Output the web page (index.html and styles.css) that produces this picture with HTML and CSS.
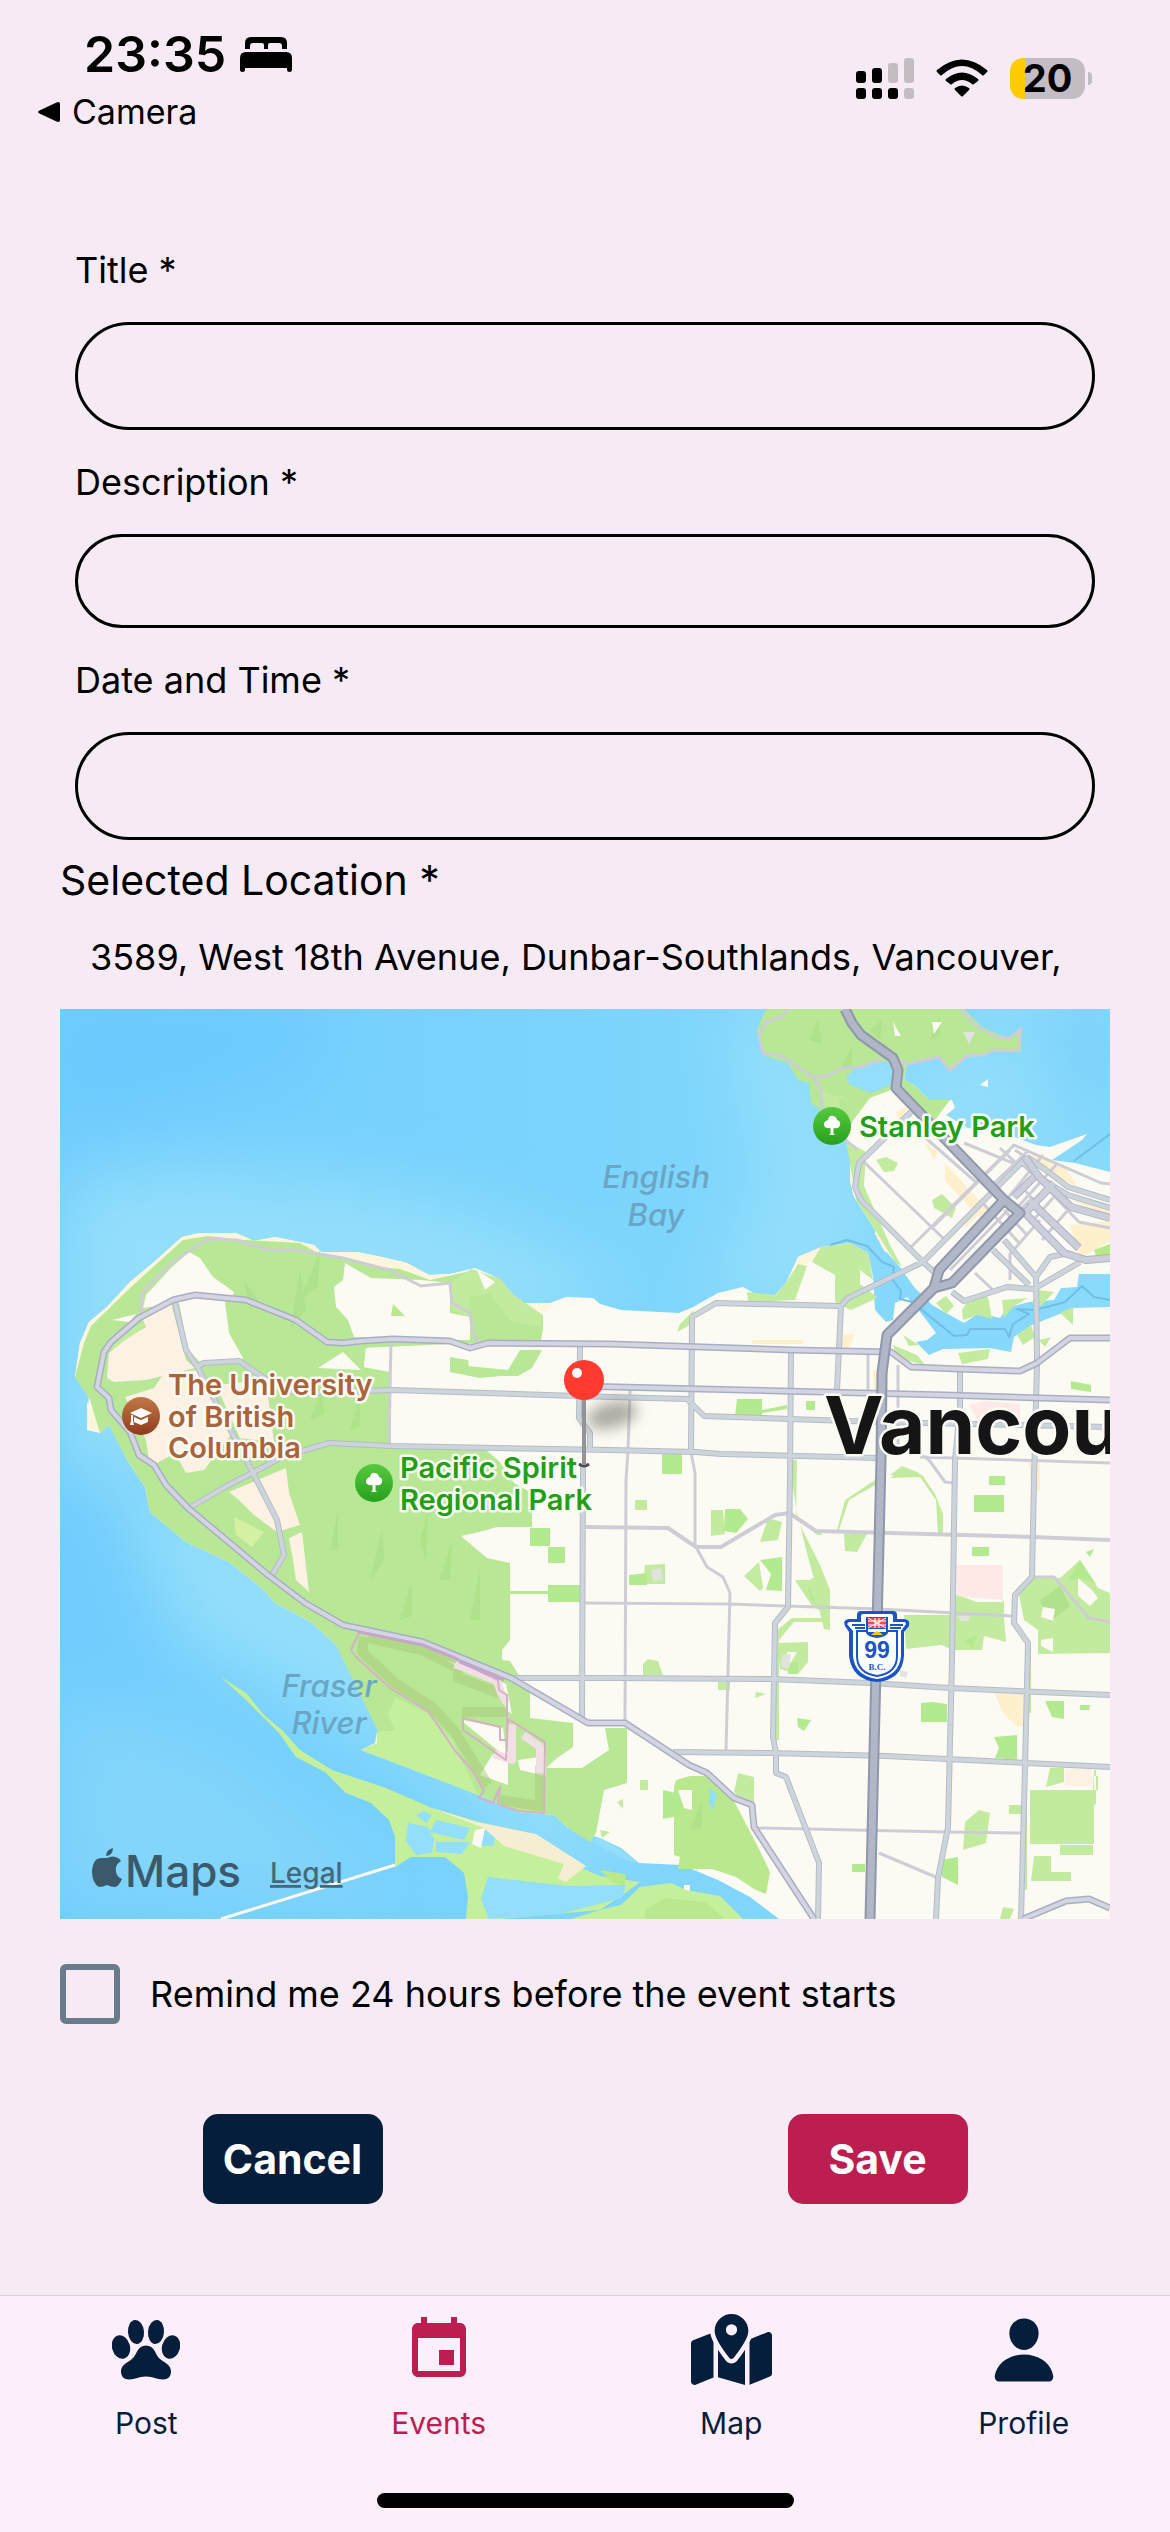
FILE: index.html
```html
<!DOCTYPE html>
<html lang="en">
<head>
<meta charset="utf-8">
<meta name="viewport" content="width=device-width, initial-scale=1">
<title>New event</title>
<link rel="stylesheet" href="styles.css">
</head>
<body>
<header class="status">
  <div class="status-left">
    <div class="clock">
      <span>23:35</span>
      <svg class="bed" viewBox="0 0 52 35" aria-hidden="true"><path d="M5 12V6q0-6 6-6h30q6 0 6 6v6h-5V9q0-3-3-3H30q-2 0-2 2v4h-4V8q0-2-2-2h-9q-3 0-3 3v3zM0 21q0-6 6-6h40q6 0 6 6v12q0 2-2.500 2T47 33v-2H5v2q0 2-2.500 2T0 33z"/></svg>
    </div>
    <a class="back" href="#camera">
      <svg class="back-arrow" viewBox="0 0 22 20" aria-hidden="true"><path d="M1.500 8.500 18.500.4Q22-.8 22 2v16q0 2.800-3.500 1.600L1.500 11.500q-3-1.500 0-3z"/></svg>
      <span>Camera</span>
    </a>
  </div>
  <div class="status-right">
    <svg class="signal" viewBox="0 0 58 41" aria-hidden="true">
      <g fill="#c4bcc3"><rect x="32" y="5" width="10" height="20" rx="3"/><rect x="48" width="10" height="25" rx="3"/><rect x="48" y="30" width="10" height="11" rx="3"/></g>
      <rect y="13" width="10" height="12" rx="3"/><rect x="16" y="10" width="10" height="15" rx="3"/><rect y="30" width="10" height="11" rx="3"/><rect x="16" y="30" width="10" height="11" rx="3"/><rect x="32" y="30" width="10" height="11" rx="3"/>
    </svg>
    <svg class="wifi" viewBox="0 0 52 38" aria-hidden="true"><path d="M1 11Q26-10 51 11q1 1 0 2l-3 3q-1 1-2 0Q26-2 6 16q-1 1-2 0l-3-3q-1-1 0-2zM10 20q16-13 32 0 1 1 0 2l-4 3q-1 1-2 0-10-8-20 0-1 1-2 0l-4-3q-1-1 0-2zM19 29q7-5 14 0 1 1 0 2l-6 6q-1 1-2 0l-6-6q-1-1 0-2z"/></svg>
    <div class="battery"><span class="battery-level">20</span><span class="battery-cap"></span></div>
  </div>
</header>

<main>
  <form class="event-form">
    <div class="fields">
      <div class="field">
        <label for="title">Title *</label>
        <input class="pill" id="title" type="text">
      </div>
      <div class="field">
        <label for="description">Description *</label>
        <input class="pill pill-short" id="description" type="text">
      </div>
      <div class="field">
        <label for="when">Date and Time *</label>
        <input class="pill" id="when" type="text">
      </div>
    </div>

    <div class="location">
      <label class="location-label" for="address">Selected Location *</label>
      <input class="address" id="address" type="text" readonly value="3589, West 18th Avenue, Dunbar-Southlands, Vancouver,">
      <svg class="map" viewBox="60 1009 1050 910" role="img" aria-label="Map of Vancouver">
        <defs>
          <linearGradient id="sea" x1="0" y1="0" x2="1" y2="0"><stop offset="0" stop-color="#71cdfd"/><stop offset=".5" stop-color="#7bd4fd"/><stop offset="1" stop-color="#8adafb"/></linearGradient>
          <linearGradient id="park" x1="0" y1="0" x2="0" y2="1"><stop offset="0" stop-color="#56ca3f"/><stop offset="1" stop-color="#28a01d"/></linearGradient>
          <linearGradient id="uni" x1="0" y1="0" x2="0" y2="1"><stop offset="0" stop-color="#c07a45"/><stop offset="1" stop-color="#903a1e"/></linearGradient>
          <filter id="soft" x="-50%" y="-50%" width="200%" height="200%"><feGaussianBlur stdDeviation="32"/></filter>
          <filter id="shade" x="-50%" y="-50%" width="200%" height="200%"><feGaussianBlur stdDeviation="7"/></filter>
          <g id="tree"><circle r="19" fill="url(#park)"/><path fill="#fff" d="M-1.500 8V2Q-9 3-8-3-6-6-4-6-3-11 1-10 4-10 5-6 9-5 8-1 7 3 1.500 2V8l2 1h-7z"/></g>
          <path id="marine" d="M814 1919 754 1827 752 1805 734 1798 707 1773 689 1765 625 1723H588L511 1678 423 1642 343 1625 305 1603 268 1575 188 1508 166 1485 154 1465 139 1455 130 1432 111 1410 109 1398 97 1387 104 1352 111 1342 139 1318 173 1300 195 1295 246 1300 296 1320 327 1342 343 1343 361 1341 393 1339 450 1341 470 1348 488 1343 610 1344 793 1350 891 1352 911 1367 959 1369 1020 1371 1037 1363 1070 1338H1110M575 1386 782 1391 945 1395 1110 1400M1023 1919 1066 1901 1089 1899 1110 1908"/>
          <path id="core" d="M1025 1213 1064 1253 1086 1260 1110 1258M1029 1200 1079 1248M1025 1157 1039 1177 1071 1207 1110 1218M1014 1197 1034 1177M1025 1213 1054 1183"/>
          <path id="highway" d="M845 1009 852 1023 861 1035 893 1058 898 1070 896 1088 1004 1200 939 1270 934 1288 887 1335 882 1373 881 1460 870 1919M1004 1200 1020 1213 952 1283 934 1288"/>
          <path id="street" d="M296 1393 393 1390 610 1397 687 1399 704 1416 789 1419 879 1422 1110 1427M189 1508 225 1487 254 1472 282 1457 329 1443 391 1446 610 1450 696 1452 721 1454 879 1458M175 1303 186 1350 198 1368 250 1467 277 1520 284 1555 271 1577M196 1367 204 1363 239 1361 264 1378 296 1393M580 1347 579 1418 590 1433V1450M583 1463 582 1717M692 1317 691 1452M692 1317 716 1303 841 1306 848 1298 923 1262 1027 1157M841 1306 837 1390M791 1350 790 1480 788 1607 775 1623 773 1737 776 1753V1773L786 1777 819 1863 818 1919M960 1370V1407L955 1460 952 1660 948 1827 938 1878 936 1919M1036 1273 1037 1363 1034 1480 1032 1577 1015 1595 1014 1623 1028 1643 1025 1767 1021 1919M511 1678H610L771 1679 871 1683 950 1688 1110 1695M673 1752 771 1753 886 1756 1110 1767M911 1112 859 1163 855 1187 861 1200 923 1262 934 1272M952 1292 964 1301 1007 1287 1034 1289 1080 1262M993 1250 1029 1285M1004 1240 1036 1277 1050 1257 1064 1254M1027 1157 1046 1170 1068 1187 1110 1200M1022 1162 1040 1178 1068 1195 1110 1208"/>
        </defs>

        <rect x="60" y="1009" width="1050" height="910" fill="url(#sea)"/>
        <g filter="url(#soft)">
          <path fill="#93defb" d="M60 1180 180 1165 360 1180 480 1210 640 1290 540 1330 60 1480z"/>
          <path fill="#93defb" d="M720 1009 760 1180 700 1310 860 1310 880 1160 800 1009zM900 1050H1030V1160H900z"/>
          <path fill="#93defb" d="M100 1440 180 1640 420 1760 560 1900 660 1830 320 1560z"/>
          <path fill="#6bc9fe" d="M60 1009H330L300 1060 60 1110zM1060 1009h50v150z"/>
          <path fill="#83d5fb" d="M60 1700 210 1740 400 1900H60zM480 1790 600 1860 740 1919V1860z"/>
        </g>

        <g fill="#fcfbf3">
          <path d="M75 1377 80 1343 89 1322 107 1307 130 1282 154 1262 182 1237 200 1233H236L254 1241 275 1237 314 1245 321 1252H357L382 1257 407 1263 429 1275 450 1274 475 1268 496 1277 511 1292 518 1303H550L566 1297 593 1298 600 1304 621 1310 679 1313 693 1307 718 1293 743 1287 757 1295H775L786 1283 798 1257 821 1247 850 1243 868 1253 873 1277 875 1310 886 1322 893 1320 895 1303 907 1297 921 1313 936 1333 927 1340 916 1342 929 1355 943 1349 989 1348 1011 1352 1014 1337 1032 1325 1057 1315 1075 1308 1110 1307V1919H779L750 1897 718 1880 682 1865 639 1863 621 1848 600 1838 568 1828 554 1815 518 1812 479 1795 393 1762 361 1750 375 1743 377 1732 395 1730 388 1715 395 1697 375 1677 336 1645 311 1622 275 1603 264 1590 229 1562 186 1542 150 1512 145 1487 127 1460 121 1447 109 1425 100 1433 87 1430 89 1393z"/>
          <path d="M1110 1172 1075 1163 1052 1160 1082 1140 1087 1134 1050 1147 1036 1145 1004 1133 968 1128 946 1115 955 1108 952 1100H929L914 1085 904 1080 907 1063 900 1058 896 1085 873 1093 858 1105 846 1140 854 1152 850 1177 854 1197 875 1230 882 1247 900 1267 914 1287 932 1305 964 1323 979 1313 1000 1318 1007 1308 1029 1302 1054 1300 1061 1288 1077 1287 1079 1274H1110z"/>
        </g>
        <path fill="#fdf6dc" d="M75 1377 80 1343 89 1322 107 1307 130 1282 154 1262 182 1237 200 1233H236L254 1241 275 1237 314 1245 321 1252H357L382 1257 407 1263 429 1275 450 1274 460 1280 420 1286 370 1268 320 1254 210 1240 150 1282 90 1335zM87 1402l8 12 5 18-13-3zM520 1304h35l-10 8zM798 1257l24-10-4 12-22 8zM850 1165l8 0-4 32-4-15zM875 1230l14 22-4 0-10-18z"/>

        <g fill="#b8e795">
          <path d="M75 1377 84 1343 91 1326 128 1290 152 1268 183 1240 208 1236 245 1240 300 1243 318 1253 350 1260 380 1267 400 1269 430 1280 475 1270 496 1279 511 1292 520 1308 543 1315 543 1328 541 1341 512 1342 490 1343 366 1348 364 1367 391 1372V1446L486 1450 500 1462 514 1483 532 1493V1527H497L462 1537 487 1558 510 1563V1640L502 1650V1660L510 1661 530 1693V1718L573 1723V1747L557 1758 546 1768H582L609 1750 605 1728H627V1783L604 1790 596 1833 590 1842 568 1828 554 1815 518 1812 479 1795 393 1762 336 1645 311 1622 275 1603 264 1590 229 1562 186 1542 150 1512 145 1487 127 1460 109 1425 100 1433 90 1400z"/>
          <path d="M766 1009H964L982 1027 1007 1038 1021 1028V1052H993L964 1058 950 1072 939 1058 907 1063 904 1080 914 1085 929 1100 950 1100 935 1120 896 1088 870 1098 855 1118 846 1130 821 1110 811 1103 809 1083 798 1080 788 1063 763 1055 757 1030z"/>
        </g>
        <g fill="#c3eb9f">
          <path d="M450 1283l21-14 30 10 10 14 32 22-2 12-30-6-22-28-20 4 2 22-20-10zM858 1105l-20-10 8 42-18-22-8-25zM110 1335l34-12-8 18-28 10z"/>
          <path d="M821 1247 850 1243 868 1253 873 1280 860 1270 860 1284 877 1297 873 1300 851 1310 835 1302V1275L812 1262zM786 1283 798 1264 807 1266 795 1300 748 1302 747 1292 775 1295zM680 1324l14-14-4 15-13 7z"/>
          <path d="M846 1140 866 1152 864 1186 890 1245 902 1267 895 1262 872 1225 856 1200zM876 1160l10-3 12 6-4 8-10 1zM932 1200l10-6 14 14-4 10-18-10z"/>
          <path d="M962 1310l8-13h18l4 22-14-4-15 5zM936 1303l10-7 8 10-8 8zM1002 1300l26-2-14 8-10 12zM1038 1290l16 2-14 15-8-4zM1060 1313l13-6v18zM958 1353l32-4-2 10-26 5zM1017 1335l14-10 4 12-12 8zM1039 1340l12-3-6 10zM893 1345l24 10 8 10-28-7zM903 1335l16 10-10 1z"/>
          <path d="M789 1460h8l-1 55 27 20-6 0-20-20zM800 1525l20 40 10 25v40l-6-1-5-20-3-24-6-20zM795 1580l15 0 8-6 12 30v12l-18-10zM777 1630l15-12h34v4h-32l-15 18v100h-5zM837 1530l8-30 30-20v5l-26 15-10 30zM890 1475l12-9 15 6 6 4 12 18 8 20v20h-5l-2-34-16-23-25-2zM844 1534h23l-10 18-12-1zM890 1478l14-11 18 10z"/>
          <path d="M777 1643l31-1v20l-10 12-18-5zM904 1615h45l35 5 20-20v18l2 24-22-6-2 14h-30l-10-5-36 4zM955 1594l22 8h24v22l-14 8-36-8z"/>
          <path d="M1018 1590 1034 1577 1060 1578 1080 1560 1098 1588 1110 1593V1653L1038 1654V1630L1024 1620z"/>
          <path d="M1030 1790h68v-14h-4v68H1030zM1050 1768h14v14l-18 5zM1094 1770h2v34l-4 2zM1060 1845h33v10h-33zM1034 1856h17v16h20v9h-40zM965 1822l14-12 11 3-4 30-23 7zM711 1510h12l2 24-14 2zM768 1518l14 4-4 18-18 2zM744 1576l15-14 4 26-3 3z"/>
          <path d="M643 1664l5-5 10 2 5 14h-20zM645 1565l20-1v20h-22zM635 1500h12v10h-12zM718 1682h12v8h-12zM756 1692l10 2-11 4zM738 1773l16 4v25l-12 0-8-10zM1009 1805h12v9h-12zM1003 1907l11 2-4 10h-10zM640 1780h8v10h-8zM617 1802l6-3v10zM600 1830l10 2-8 6z"/>
          <path d="M1028 1643h3v70h-3zM1025 1770h2v120h-2z"/>
        </g>
        <path fill="#b9e88f" d="M676 1780l14-4 24 0 20 25 24 46 12 25-4 22-12-5-18-12-24-8h-34l2-12-6-2v-68z"/>
        <g fill="#b4ea8f">
          <path d="M737 1399h25v17h-27zM806 1401h9v9h-9zM762 1410l25-5v4l-25 4zM662 1454h20v20h-20zM725 1509l15 0 8 10-12 14-12-2zM760 1560l22-3v34l-16-1 5-16zM974 1495h30v17h-30zM989 1476h16v9h-16zM972 1547h17v9h-17zM1071 1381l20 4v7l-20-3zM1080 1560l16 24-12-6-16 3zM1045 1701h19v18l-12-2zM1080 1705h10l-1 5-9 0zM921 1703l12-1 14 2v18h-26zM994 1737l23-2v25l-22-2 4-10zM797 1718l14 2-7 11-6-4zM663 1790l22 5-2 20-20 4zM941 1860l17-3v28l-16-8zM852 1864h13v8h-13zM629 1575l18-2v12h-18zM1086 1552l8-3-4 8zM788 1662h10v12h-10zM808 1585l8 18-6-4zM965 1640l12-5-4 14z"/>
          <path d="M548 1547h17v16h-17zM548 1585h33v17h-33zM510 1591h38v3h-38zM530 1528h20v18h-20z"/>
        </g>
        <path fill="#afe28b" d="M300 1300l20-50-2 36zM290 1330l10-60 6 40zM250 1310l-6-30 14 20zM420 1540l8-30-2 50zM440 1580l12-40-2 40zM470 1620l10-50v50zM370 1580l12-50 2 30zM330 1550l8-40v40zM400 1620l12-40v36zM310 1420l12-30 2 24zM350 1430l10-34v30zM810 1040l8-20 4 24zM840 1070l12-24v20zM870 1030l12-10-2 20zM930 1040l10-24v20zM690 1830l12-30v28zM1040 1600l20-14 10 20-20 16z"/>

        <g fill="#fcfaf2">
          <path d="M189 1252 200 1258 213 1277 234 1292 232 1297 225 1302 229 1333 243 1358 236 1363 200 1362 188 1350 179 1303 143 1308 146 1295 171 1268zM345 1263 371 1278 421 1280 450 1283V1313L470 1317V1340H450L354 1337 348 1320 336 1307 334 1287 343 1280zM318 1368l25-16 18 18zM477 1270l18 12-10 8zM112 1320l24-6-6 8z"/>
          <path d="M366 1348 450 1344V1370L480 1376 541 1378 560 1360 580 1350H610V1460H500L486 1450 391 1444V1372L364 1367zM497 1528l2 12 30-6v28l-22 0-24-12-22-14zM893 1022l8 14h-6zM932 1022h10l-8 12zM980 1085l8-6v8z"/>
          <path d="M446 1660l30 10 30 14 6 30-6-4-6-32-44-12zM463 1720l40 8 4 30-44-36zM480 1775l12-20 16-4 0 34zM518 1760l28-4v20l-26-6zM1078 1578l14 12 6 8-8 8-12-10zM1043 1607l12 2-2 12-12-4zM1041 1640l12-2v14l-12-6zM787 1652h10l-7 12-4-4zM678 1790l14 0v20l-8-2zM684 1885h6v8h-6z"/>
        </g>
        <path fill="#b8e795" d="M450 1357l18 3 2 14 30 2-20 2-30-6zM520 1350l22 0-10 18-14 8-50 0 0-10 40 4z"/>
        <g fill="#fdf1e3">
          <path d="M171 1303 186 1360 195 1368 146 1380 114 1382 107 1378 109 1353 125 1340 146 1327 143 1320zM164 1373 200 1370 211 1393 232 1433 204 1470 186 1473 175 1453 150 1467 146 1440 125 1397 154 1388zM229 1492 286 1468 289 1493 300 1525 277 1532 254 1515 239 1500zM289 1538 302 1532 309 1592 296 1580 293 1560zM216 1385l50-5 8 62-34-4zM1066 1769h26v18l-28-2z"/>
        </g>
        <path fill="#fff0cd" d="M994 1692h32v34l-10 0-14-14zM1028 1460h12v30h-8zM873 1370h15v22h-14zM843 1335l12-1-6 14-8-2zM751 1340h52v4h-50zM945 1163l44 48-10 6-34-36zM972 1205l12 4-20 20zM1070 1225l40-4v20l-30 18zM1027 1150l40 20 10 16-30-12zM1072 1200l38 4v14zM896 1112l12-6-8 18zM924 1142l14 10-4 8z"/>
        <path fill="#ffe9e7" d="M968 1405l16-4 36 3v20l-38 2zM956 1565h47v35l-46-4z"/>
        <path fill="#e2e2df" d="M963 1032h12l-6 12zM651 1570l10-2 2 12-10 1zM782 1655l9-1-2 15-8-2zM957 1616l12 0v5h-8zM900 1670l8 2-2 6-6-2z"/>
        <path fill="#b8e987" d="M391 1316l2-12 12 12zM1094 1250l16-6v14l-14-2z"/>
        <path fill="#d4f1a2" d="M234 1517l30 15-12 15-16-12z"/>

        <g fill="#92defb">
          <path d="M846 1077l11-10 29-6 7 6-2 18-20 8-21-8zM709 1788l8 6-4 16-4-8z"/>
        </g>
        <path fill="#c4f09b" d="M221 1677 246 1693 264 1715 282 1730 300 1750 332 1770 386 1788 432 1808 479 1822 525 1832 550 1843 579 1867 600 1876 626 1880 640 1882 625 1893 600 1910 500 1919H466L468 1897 464 1873 445 1857H411L395 1867V1837L389 1820 371 1803 346 1793 325 1772 296 1757 279 1733 246 1700zM571 1919 600 1910 621 1905 640 1887 671 1883 686 1890 720 1896 743 1919zM361 1750l16-7v-11l18-2-7-15 7-18 30 15 27 28 26 55-85-33z"/>
        <path fill="#b9e88f" d="M645 1910l20-12 40 4 20 17h-80zM600 1870l26 4-2 12-12-4z"/>
        <path fill="#92defb" d="M416 1815l8-4 8 4-6 8zM408 1823l20 4 6 12-2 14-16 2-10-14zM436 1820l34 8-6 12-34-8zM436 1842l34 0-8 12-26-2zM485 1830l12 2-4 14-14 0zM488 1877 568 1886 626 1885 622 1898 560 1914 489 1919 481 1899z"/>
        <path fill="#f6eed3" d="M432 1808l44 14 60 12 50 32-20 16-8-4 6-14-60-18-20-18z"/>
        <path fill="#fbf9f0" d="M475 1830l10-2-4 20-9-4z"/>
        <path fill="#92defb" d="M600 1838 621 1850 640 1864 625 1860 590 1840z"/>
        <path fill="none" stroke="#fdfaf1" stroke-width="3" d="M221 1919 395 1865"/>

        <g fill="none" stroke-linejoin="round">
          <path stroke="#72bde6" stroke-width="2" d="M830 1245l17-5 20 6 15 16 12 5-2 12 9 12-1 8 12 3 42 34 13-1 3-6 35 0 4 8 4-13 16-10-12-5 18 1 30-8 17-16 12 11 16 3M1074 1161l36-27"/>
          <path stroke="#a9c979" stroke-opacity=".5" stroke-width="10" d="M364 1637 362 1652 395 1683 432 1707 455 1732 488 1785M368 1638l54 12 36 18 0 10 44 16M462 1712l44 0M500 1800l40 6v-40"/>
          <path stroke="#f0e0e4" stroke-width="8" d="M455 1664l42 17 4 12 6 10M512 1724v36l-18-6M523 1735l17 12v26"/>
          <path stroke="#d7b0c6" stroke-width="2" d="M359 1632 351 1650 357 1658 390 1688 429 1712 445 1736 456 1752 472 1770 484 1791 479 1798 493 1803 500 1787 498 1804 518 1811 544 1813 545 1742 508 1719 506 1760 463 1730 463 1718 500 1727V1740H507V1695L499 1690 498 1680 456 1660"/>

          <g stroke="#cecdd6" stroke-width="3">
            <path d="M141 1315V1295L154 1280 173 1262 207 1239 236 1240 268 1250H296L343 1258 389 1270 421 1286 450 1283 452 1303 470 1313 473 1333 479 1343M391 1340 389 1443M630 1390 628 1450 626 1480 625 1723M691 1452 695 1473V1547M696 1547 707 1567 723 1577 730 1593 726 1750M584 1603 730 1604 786 1606 879 1609 1012 1616M757 1828 946 1832 1021 1833M879 1853 938 1878M921 1455 929 1460 945 1482 954 1483M1034 1577H1054L1089 1618 1110 1622M920 1457 1110 1463M898 1365v90M868 1352v90"/>
            <path stroke-width="4" d="M586 1527 668 1528 696 1547H721L775 1515 789 1513 816 1531 1032 1537 1110 1540"/>
            <path d="M788 1009 782 1017 766 1022 759 1035 763 1053 782 1056 814 1078 821 1090 822 1110 846 1140 857 1150M814 1078 829 1075 843 1068 861 1067 882 1059M900 1062 907 1064 939 1057 950 1070 968 1055 984 1055 993 1050 1018 1051 1021 1029 1011 1038 998 1038 975 1025 961 1010"/>
            <path d="M864 1162 945 1240M911 1247 1014 1145 1101 1183 1110 1184M920 1133 977 1183M964 1143 1018 1165 1000 1148M931 1229 977 1183 1010 1150M1033 1197 952 1280M975 1273 993 1290M950 1270l60-62M1040 1220l-30 34 0 26M1015 1150l30 20M1029 1150l-40 38M1043 1155l-36 44M1056 1165l-40 44M1060 1190l-30 34M1068 1210l-26 30M1004 1210l22 24M980 1200l40 44M1039 1180l40 42 31 6M1020 1185l45 50"/>
          </g>
          <use href="#street" stroke="#b4bccb" stroke-width="6"/>
          <use href="#street" stroke="#cdd5db" stroke-width="4"/>
          <use href="#core" stroke="#aeb2c6" stroke-width="8"/>
          <use href="#core" stroke="#cdcedb" stroke-width="6"/>
          <use href="#marine" stroke="#a8afc5" stroke-width="7"/>
          <use href="#marine" stroke="#d4d5e1" stroke-width="4"/>
          <path stroke="#c6a4cd" stroke-width="3" d="M359 1632l64 13 34 14M460 1662l44 18"/>
          <use href="#highway" stroke="#8f97ac" stroke-width="11"/>
          <use href="#highway" stroke="#b1b7c6" stroke-width="7"/>
        </g>

        <g class="water-label" text-anchor="middle">
          <text x="656" y="1188">English</text><text x="656" y="1226">Bay</text>
          <text x="329" y="1697">Fraser</text><text x="329" y="1734">River</text>
        </g>
        <g class="place place-park">
          <use href="#tree" x="832" y="1126"/><text x="859" y="1137">Stanley Park</text>
          <use href="#tree" x="374" y="1483"/><text x="400" y="1478">Pacific Spirit</text><text x="400" y="1510">Regional Park</text>
        </g>
        <g class="place place-uni">
          <circle cx="141" cy="1416" r="19" fill="url(#uni)"/>
          <path fill="#fff" d="M130 1413l11-5 11 5-11 5zM134 1417l7 3 7-3v5l-7 3-7-3zM131 1415h2v6l1 4h-4l1-4z"/>
          <text x="168" y="1395">The University</text><text x="168" y="1427">of British</text><text x="168" y="1458">Columbia</text>
        </g>
        <text class="city" x="824" y="1454">Vancouver</text>

        <g>
          <path fill="#1a55c8" d="M861 1611h32q4 0 4 4v4h7q7 1 5 7l-5 6v24q-2 24-27 26-25-2-28-26v-24l-4-6q-3-6 4-7h8v-4q0-4 4-4z"/>
          <path fill="#fff" d="M863 1614h28q2 0 2 2v6h12l1 2-5 7v25q-2 20-24 23-22-3-24-23v-25l-6-7 2-2h12v-6q0-2 2-2z"/>
          <path fill="none" stroke="#1a55c8" stroke-width="2" d="M852 1625h13m25 0h13M855 1628h10m25 0h11M866 1631h-9v25q0 17 20 20 20-3 20-20v-25h-9"/>
          <path fill="#1a55c8" d="M866 1617h22v16q-2 4-11 5-9-1-11-5z"/>
          <path fill="#ef4a57" d="M868 1618h18v10h-18z"/>
          <path stroke="#fff" stroke-width="1" d="M868 1621h18M868 1625h18M875 1618v10M879 1618v10M868 1618l18 10M886 1618l-18 10"/>
          <path fill="#fff" d="M868 1629h18v3h-18z"/><path fill="#fbc80b" d="M871 1635q6-7 12 0z"/>
          <text class="route" x="877" y="1658" text-anchor="middle">99</text>
          <text class="route-bc" x="877" y="1670" text-anchor="middle">B.C.</text>
        </g>

        <ellipse cx="612" cy="1415" rx="26" ry="13" fill="#77786f" opacity=".6" filter="url(#shade)" transform="rotate(-15 612 1415)"/>
        <path fill="none" stroke="#4d4e50" stroke-width="3" d="M579 1464q5 4 10 0"/>
        <path fill="none" stroke="#929496" stroke-width="4" d="M584 1398v67"/>
        <circle cx="584" cy="1380" r="20" fill="#ff3a2f"/><circle cx="577" cy="1373" r="5" fill="#fff"/>

        <path fill="#3a5a6b" d="M107 1858q6-3 11 0 2 1 3 3-8 5-4 14 1 2 5 4-3 7-7 8-4 0-8-2-4 2-8 2-7-4-7-16 1-14 11-13l4 0zM106 1856q0-6 7-8 0 7-7 8z"/>
        <text class="maps-mark" x="125" y="1887">Maps</text>
        <a href="#legal"><text class="legal" x="270" y="1883">Legal</text></a>
      </svg>
    </div>

    <div class="remind">
      <input class="tick" id="remind" type="checkbox">
      <label for="remind">Remind me 24 hours before the event starts</label>
    </div>

    <div class="actions">
      <button class="btn btn-cancel" type="button">Cancel</button>
      <button class="btn btn-save" type="submit">Save</button>
    </div>
  </form>
</main>

<footer class="tabbar">
  <nav class="tabs">
    <a class="tab" href="#post">
      <svg viewBox="0 -6 68 72" aria-hidden="true"><g><ellipse cx="9" cy="27" rx="9" ry="12" transform="rotate(-15 9 27)"/><ellipse cx="24" cy="12" rx="8" ry="12" transform="rotate(-5 24 12)"/><ellipse cx="44" cy="12" rx="8" ry="12" transform="rotate(5 44 12)"/><ellipse cx="59" cy="27" rx="9" ry="12" transform="rotate(15 59 27)"/><path d="M34 25.500c4 0 7 2 9 6 2 4 3 6 7 9 5 3 9 6 9 11 0 5-3 8-8 8-7 0-9-3-17-3s-10 3-17 3c-5 0-8-3-8-8s4-8 9-11c4-3 5-5 7-9 2-4 5-6 9-6z"/></g></svg>
      <span>Post</span>
    </a>
    <a class="tab tab-active" href="#events" aria-current="page">
      <svg viewBox="0 0 24 24" aria-hidden="true"><path d="M17 12h-5v5h5v-5zM16 1v2H8V1H6v2H5c-1.110 0-1.990.9-1.990 2L3 19c0 1.100.89 2 2 2h14c1.100 0 2-.9 2-2V5c0-1.100-.9-2-2-2h-1V1h-2zm3 18H5V8h14v11z"/></svg>
      <span>Events</span>
    </a>
    <a class="tab" href="#map">
      <svg viewBox="0 0 576 512" aria-hidden="true"><path d="M408 120c0 54.600-73.100 151.900-105.200 192c-7.700 9.600-22 9.600-29.600 0C241.100 271.900 168 174.600 168 120C168 53.700 221.700 0 288 0s120 53.700 120 120zm8 80.400c3.500-6.900 6.700-13.800 9.600-20.600c.5-1.200 1-2.500 1.500-3.700l116-46.400C558.900 123.400 576 135 576 152V422.800c0 9.800-6 18.600-15.100 22.300L416 503V200.400zM137.600 138.300c2.400 14.100 7.200 28.300 12.800 41.500c2.900 6.800 6.100 13.700 9.600 20.600V451.800L32.900 502.700C17.100 509 0 497.400 0 480.400V209.600c0-9.800 6-18.600 15.100-22.300l122.600-49zM327.800 332c13.900-17.400 35.700-45.700 56.200-77V504.300L192 449.400V255c20.500 31.300 42.300 59.600 56.200 77c20.500 25.600 59.100 25.600 79.600 0zM288 152a40 40 0 1 0 0-80 40 40 0 1 0 0 80z"/></svg>
      <span>Map</span>
    </a>
    <a class="tab" href="#profile">
      <svg viewBox="0 0 512 512" aria-hidden="true"><path d="M332.640 64.580C313.180 43.570 286 32 256 32c-30.160 0-57.430 11.500-76.800 32.380-19.580 21.110-29.120 49.800-26.880 80.780C156.760 206.280 203.270 256 256 256s99.160-49.710 103.670-110.820c2.270-30.700-7.330-59.330-27.030-80.600zM432 480H80a31 31 0 01-24.200-11.130c-6.500-7.770-9.120-18.380-7.180-29.110C57.060 392.940 83.400 353.610 124.800 326c36.780-24.510 83.370-38 131.200-38s94.420 13.500 131.200 38c41.400 27.600 67.740 66.930 76.180 113.750 1.940 10.730-.68 21.340-7.180 29.110A31 31 0 01432 480z"/></svg>
      <span>Profile</span>
    </a>
  </nav>
  <div class="home-bar"></div>
</footer>
</body>
</html>
```
FILE: styles.css
```css
* { box-sizing: border-box; }

body {
  margin: 0;
  min-height: 100vh;
  display: flex;
  flex-direction: column;
  background: #f6ebf5;
  color: #000;
  font-family: Inter, "Liberation Sans", sans-serif;
  font-size: 36px;
  line-height: 48px;
}

a { color: inherit; text-decoration: none; }

input, button { margin: 0; font: inherit; color: inherit; }

/* Status bar */
.status {
  display: flex;
  justify-content: space-between;
  align-items: center;
  padding: 24px 78px 0 38px;
}

.status-left { display: flex; flex-direction: column; gap: 8px; }

.clock {
  display: flex;
  align-items: center;
  gap: 14px;
  padding-left: 46px;
  font-size: 50px;
  font-weight: 600;
  line-height: 60px;
}

.bed { width: 52px; height: 35px; }

.back {
  display: flex;
  align-items: center;
  gap: 12px;
  font-size: 34px;
  font-weight: 400;
  line-height: 40px;
}

.back-arrow { width: 22px; height: 20px; }

.status-right { display: flex; align-items: center; gap: 22px; }

.signal { width: 58px; height: 41px; }

.wifi { width: 52px; height: 38px; }

.battery { display: flex; align-items: center; gap: 3px; }

.battery-level {
  width: 75px;
  height: 41px;
  border-radius: 13px;
  background: linear-gradient(to right, #fc0 20%, #c4bcc3 20%);
  font-size: 38px;
  font-weight: 700;
  line-height: 41px;
  text-align: center;
}

.battery-cap {
  width: 4px;
  height: 13px;
  border-radius: 0 6px 6px 0;
  background: #c4bcc3;
}

/* Event form */
.event-form { padding-top: 114px; }

.fields {
  display: flex;
  flex-direction: column;
  gap: 28px;
  padding: 0 75px;
}

.field { display: flex; flex-direction: column; gap: 28px; }

.pill {
  width: 100%;
  height: 108px;
  padding: 0 40px;
  border: 3px solid #000;
  border-radius: 54px;
  background: transparent;
}

.pill-short { height: 94px; }

.location {
  display: flex;
  flex-direction: column;
  padding: 16px 60px 0;
}

.location-label { font-size: 41px; }

.address {
  width: 100%;
  height: 48px;
  margin: 29px 0 28px;
  padding: 0 30px;
  border: 0;
  background: transparent;
}

.map { display: block; width: 100%; height: auto; }

.water-label {
  fill: #6aa6c3;
  font-size: 31px;
  font-style: italic;
  font-weight: 500;
}

.place {
  font-size: 29px;
  font-weight: 600;
}

.place text, .city {
  stroke: #fbfaf4;
  stroke-width: 5px;
  stroke-linejoin: round;
  paint-order: stroke;
}

.place-park { fill: #22a015; }

.place-uni { fill: #a9643a; }

.city {
  fill: #151515;
  font-size: 80px;
  font-weight: 700;
}

.route {
  fill: #1a55c8;
  font-family: "Liberation Sans", sans-serif;
  font-size: 23px;
  font-weight: 700;
}

.route-bc {
  fill: #1a55c8;
  font-family: "Liberation Serif", serif;
  font-size: 9px;
  font-weight: 700;
}

.maps-mark {
  fill: #3a5a6b;
  font-size: 44px;
  font-weight: 500;
}

.legal {
  fill: #45697c;
  font-size: 28px;
  font-weight: 500;
  text-decoration: underline;
}

.remind {
  display: flex;
  align-items: center;
  gap: 30px;
  padding: 45px 60px 0;
}

.tick {
  appearance: none;
  width: 60px;
  height: 60px;
  border: 6px solid #6a7b8b;
  border-radius: 6px;
}

.actions {
  display: flex;
  justify-content: space-around;
  padding: 90px 0;
}

.btn {
  width: 180px;
  height: 90px;
  padding: 0;
  border: 0;
  border-radius: 15px;
  color: #fff;
  font-size: 41px;
  font-weight: 700;
}

.btn-cancel { background: #051e3c; }

.btn-save { background: #bc1e50; }

/* Bottom navigation */
.tabbar {
  display: flex;
  flex-direction: column;
  align-items: center;
  gap: 50px;
  margin-top: auto;
  padding: 18px 0 24px;
  border-top: 1px solid #d8d3d8;
  background: #fdeefc;
}

.tabs { display: flex; width: 100%; }

.tab {
  flex: 1;
  display: flex;
  flex-direction: column;
  align-items: center;
  gap: 17px;
  color: #051e3c;
  font-size: 30px;
  line-height: 40px;
}

.tab svg { height: 72px; fill: currentColor; }

.tab-active { color: #bc1e50; }

.home-bar {
  width: 417px;
  height: 15px;
  border-radius: 8px;
  background: #000;
}
```
